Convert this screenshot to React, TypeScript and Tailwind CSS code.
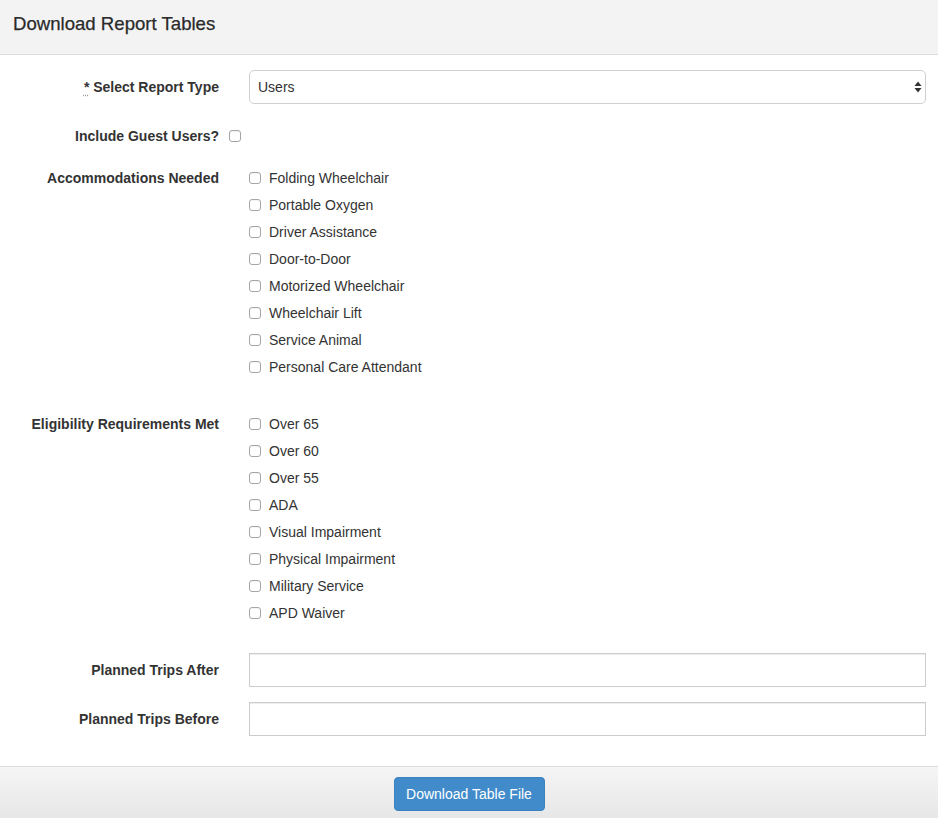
import React from "react";

const accommodations = [
  "Folding Wheelchair",
  "Portable Oxygen",
  "Driver Assistance",
  "Door-to-Door",
  "Motorized Wheelchair",
  "Wheelchair Lift",
  "Service Animal",
  "Personal Care Attendant",
];

const eligibility = [
  "Over 65",
  "Over 60",
  "Over 55",
  "ADA",
  "Visual Impairment",
  "Physical Impairment",
  "Military Service",
  "APD Waiver",
];

function Box() {
  return (
    <span className="inline-block w-[12px] h-[12px] border border-[#a6a6a6] rounded-[3px] bg-white shrink-0 shadow-[inset_0_1px_1px_rgba(0,0,0,0.05)]" />
  );
}

function CheckList({ items }: { items: string[] }) {
  return (
    <div className="flex flex-col">
      {items.map((t) => (
        <div key={t} className="h-[27px] pt-[7px] flex items-start">
          <div className="h-[20px] flex items-center">
            <Box />
            <span className="ml-[8px] text-[14px] leading-[20px] text-[#333]">{t}</span>
          </div>
        </div>
      ))}
    </div>
  );
}

function Label({ children }: { children: React.ReactNode }) {
  return (
    <div className="w-[219px] shrink-0 text-right font-bold text-[14px] leading-[20px] text-[#333] pt-[7px]">
      {children}
    </div>
  );
}

export default function App() {
  return (
    <div
      className="w-[938px] h-[818px] bg-white overflow-hidden text-[#333]"
      style={{ fontFamily: '"Liberation Sans", Arial, Helvetica, sans-serif' }}
    >
      <div className="h-[55px] bg-[#f3f3f3] border-b border-[#dcdcdc] px-[13px] pt-[14px]">
        <h3 className="text-[18.6px] leading-[20px] text-[#2a2a2a] font-normal [-webkit-text-stroke:0.25px_#2a2a2a]">Download Report Tables</h3>
      </div>

      <div className="pt-[15px] pr-[12px]">
        {/* Select report type */}
        <div className="flex mb-[15px]">
          <Label>
            <span className="underline decoration-dotted decoration-[#999] underline-offset-[3px]">*</span> Select Report Type
          </Label>
          <div className="ml-[30px] flex-1 relative">
            <div className="h-[34px] border border-[#cfcfcf] rounded-[5px] bg-white flex items-center pl-[8px] text-[14px] text-[#333]">
              Users
            </div>
            <svg className="absolute right-[4px] top-[11px]" width="8" height="12" viewBox="0 0 8 12">
              <path d="M4 0.5 L7.5 5 L0.5 5 Z" fill="#333" />
              <path d="M4 11.5 L7.5 7 L0.5 7 Z" fill="#333" />
            </svg>
          </div>
        </div>

        {/* Include guests */}
        <div className="flex mb-[15px]">
          <Label>Include Guest Users?</Label>
          <div className="ml-[10px] pt-[7px] h-[27px] flex items-start">
            <div className="h-[20px] flex items-center">
              <Box />
            </div>
          </div>
        </div>

        {/* Accommodations */}
        <div className="flex mb-[30px]">
          <Label>Accommodations Needed</Label>
          <div className="ml-[30px] flex-1">
            <CheckList items={accommodations} />
          </div>
        </div>

        {/* Eligibility */}
        <div className="flex mb-[30px]">
          <Label>Eligibility Requirements Met</Label>
          <div className="ml-[30px] flex-1">
            <CheckList items={eligibility} />
          </div>
        </div>

        <div className="flex mb-[15px]">
          <Label>Planned Trips After</Label>
          <div className="ml-[30px] flex-1">
            <div className="h-[34px] border border-[#cccccc] bg-white shadow-[inset_0_1px_1px_rgba(0,0,0,0.075)]" />
          </div>
        </div>

        <div className="flex mb-[30px]">
          <Label>Planned Trips Before</Label>
          <div className="ml-[30px] flex-1">
            <div className="h-[34px] border border-[#cccccc] bg-white shadow-[inset_0_1px_1px_rgba(0,0,0,0.075)]" />
          </div>
        </div>
      </div>

      <div className="border-t border-[#dcdcdc] bg-gradient-to-b from-[#f5f5f5] to-[#e6e6e6] pt-[10px] pb-[10px] flex justify-center">
        <button className="w-[151px] h-[34px] rounded-[4px] bg-[#428bca] border border-[#3a82c0] text-white text-[14px] leading-[20px]">
          Download Table File
        </button>
      </div>
    </div>
  );
}
